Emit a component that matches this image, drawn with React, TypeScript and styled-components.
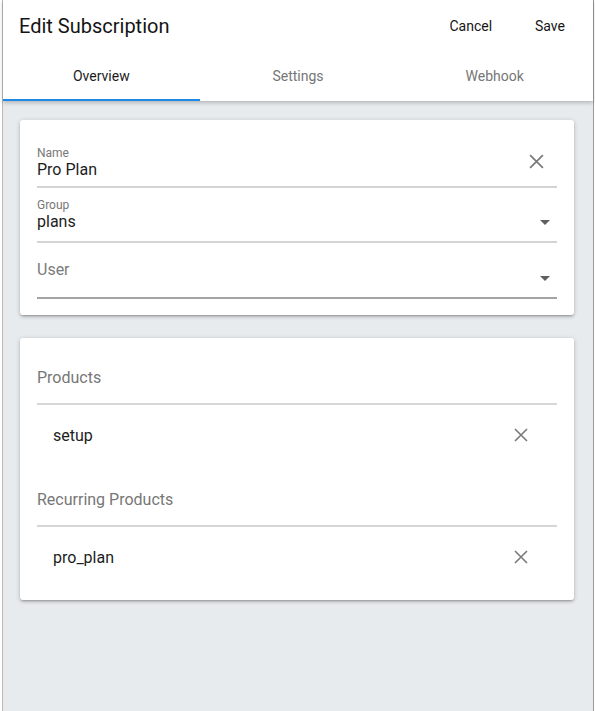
import React from 'react';
import styled, {createGlobalStyle} from 'styled-components';

const GlobalStyle = createGlobalStyle`
    html, body {
        margin: 0;
        padding: 0;
        background: #ffffff;
    }
    body {
        font-family: Roboto, "Noto Sans", "Liberation Sans", sans-serif;
        -webkit-font-smoothing: antialiased;
    }
    * {
        box-sizing: border-box;
    }
`;

const tabs = ['Overview', 'Settings', 'Webhook'];

function CloseIcon({size = 14, color = '#7a7a7a'}: {size?: number; color?: string}) {
    return (
        <svg width={size} height={size} viewBox="0 0 14 14">
            <path d="M1 1 L13 13 M13 1 L1 13" stroke={color} strokeWidth="1.6" fill="none"/>
        </svg>
    );
}

function ArrowDown() {
    return (
        <svg width="10" height="5" viewBox="0 0 10 5">
            <path d="M0 0 L10 0 L5 5 Z" fill="#5f5f5f"/>
        </svg>
    );
}

export default function App() {
    return (
        <>
            <GlobalStyle/>
            <Frame>
                <Header>
                    <TitleRow>
                        <Title>Edit Subscription</Title>
                        <Actions>
                            <TextButton>Cancel</TextButton>
                            <TextButton>Save</TextButton>
                        </Actions>
                    </TitleRow>
                    <TabBar>
                        {tabs.map((t, i) => (
                            <Tab key={t} $active={i === 0}>{t}</Tab>
                        ))}
                    </TabBar>
                </Header>

                <Content>
                    <Card $pad="27px 17px 16px">
                        <Field $top="0" $bottom="7px" $line="#d4d4d4">
                            <FieldBody>
                                <Label>Name</Label>
                                <Value>Pro Plan</Value>
                            </FieldBody>
                            <Adornment $offset="-2px" $right="10px"><CloseIcon size={15}/></Adornment>
                        </Field>
                        <Field $top="11px" $bottom="10px" $line="#d4d4d4">
                            <FieldBody>
                                <Label>Group</Label>
                                <Value>plans</Value>
                            </FieldBody>
                            <Adornment $offset="7px"><ArrowDown/></Adornment>
                        </Field>
                        <Field $top="17px" $bottom="18px" $line="#a4a4a4">
                            <FieldBody>
                                <Placeholder>User</Placeholder>
                            </FieldBody>
                            <Adornment $offset="9px"><ArrowDown/></Adornment>
                        </Field>
                    </Card>

                    <Card $pad="0 17px 13px">
                        <SectionHead $top="30px">Products</SectionHead>
                        <ItemRow>
                            <span>setup</span>
                            <CloseIcon/>
                        </ItemRow>
                        <SectionHead $top="25px">Recurring Products</SectionHead>
                        <ItemRow>
                            <span>pro_plan</span>
                            <CloseIcon/>
                        </ItemRow>
                    </Card>
                </Content>
            </Frame>
        </>
    );
}

const Frame = styled.div`
    margin: 0 1px 0 2px;
    min-height: 100vh;
    border-left: 1px solid #b9b9b9;
    border-right: 1px solid #9a9a9a;
    background: #e8ebee;
`;

const Header = styled.header`
    background: #ffffff;
    box-shadow: 0 2px 4px rgba(0, 0, 0, 0.22);
    position: relative;
`;

const TitleRow = styled.div`
    height: 52px;
    display: flex;
    align-items: center;
    justify-content: space-between;
    padding: 0 7px 0 16px;
`;

const Title = styled.h1`
    margin: 0;
    font-size: 20px;
    font-weight: 400;
    color: #141414;
`;

const Actions = styled.div`
    display: flex;
`;

const TextButton = styled.button`
    border: none;
    background: none;
    font-family: inherit;
    font-size: 14px;
    color: #161616;
    padding: 6px 21px 6px 22px;
    cursor: pointer;
`;

const TabBar = styled.nav`
    display: grid;
    grid-template-columns: repeat(3, 1fr);
    height: 49px;
`;

const Tab = styled.div<{$active?: boolean}>`
    display: flex;
    align-items: center;
    justify-content: center;
    font-size: 14px;
    color: ${({$active}) => ($active ? '#1c1c1c' : '#767676')};
    border-bottom: 2px solid ${({$active}) => ($active ? '#1e88e5' : 'transparent')};
`;

const Content = styled.main`
    display: flex;
    flex-direction: column;
    gap: 23px;
    padding: 19px 19px 0 17px;
`;

const Card = styled.section<{$pad: string}>`
    background: #ffffff;
    border-radius: 3px;
    padding: ${({$pad}) => $pad};
    box-shadow: 0 1px 5px rgba(0, 0, 0, 0.2), 0 2px 2px rgba(0, 0, 0, 0.12), 0 3px 1px -2px rgba(0, 0, 0, 0.1);
`;

const Field = styled.div<{$top: string; $bottom: string; $line: string}>`
    display: flex;
    align-items: center;
    padding: ${({$top, $bottom}) => `${$top} 0 ${$bottom}`};
    border-bottom: 2px solid ${({$line}) => $line};
`;

const FieldBody = styled.div`
    flex: 1;
    display: flex;
    flex-direction: column;
`;

const Label = styled.span`
    font-size: 12px;
    line-height: 13px;
    color: #777777;
`;

const Value = styled.span`
    font-size: 16px;
    line-height: 19px;
    color: #1d1d1d;
`;

const Placeholder = styled.span`
    font-size: 16px;
    line-height: 19px;
    color: #7b7b7b;
`;

const Adornment = styled.div<{$offset: string; $right?: string}>`
    display: flex;
    align-items: center;
    justify-content: center;
    width: 22px;
    margin-right: ${({$right}) => $right || '1px'};
    transform: translateY(${({$offset}) => $offset});
`;

const SectionHead = styled.div<{$top: string}>`
    padding: ${({$top}) => $top} 0 15px;
    font-size: 16px;
    line-height: 20px;
    color: #777777;
    border-bottom: 2px solid #d6d6d6;
`;

const ItemRow = styled.div`
    height: 60px;
    display: flex;
    align-items: center;
    justify-content: space-between;
    padding: 0 29px 0 16px;
    font-size: 16px;
    color: #1d1d1d;
`;
